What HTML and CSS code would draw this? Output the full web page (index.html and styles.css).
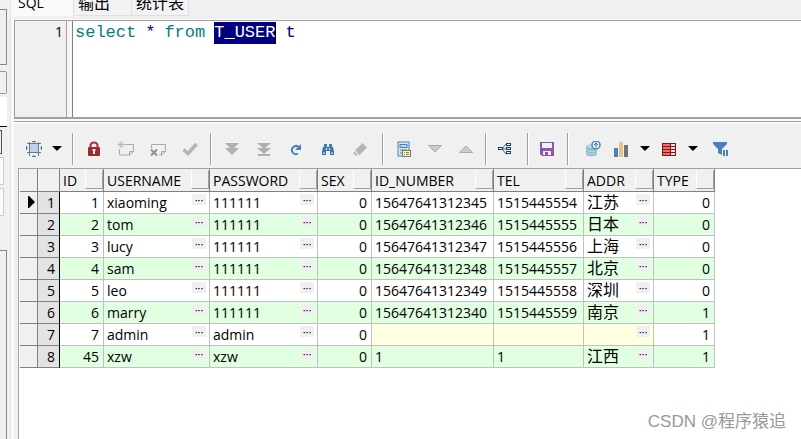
FILE: index.html
```html
<!DOCTYPE html>
<html lang="zh-CN">
<head>
<meta charset="utf-8">
<title>SQL</title>
<link rel="stylesheet" href="styles.css">
</head>
<body>
<aside class="dock">
  <div class="slot slot-list"></div>
  <div class="slot slot-button"></div>
  <div class="slot slot-page"></div>
  <div class="slot slot-field"></div>
  <div class="slot slot-pane"></div>
  <div class="slot slot-pane"></div>
  <div class="slot slot-tree"></div>
</aside>
<main class="window">
  <nav class="tabs">
    <button class="tab active" type="button">SQL</button>
    <button class="tab" type="button">输出</button>
    <button class="tab" type="button">统计表</button>
  </nav>
  <section class="editor">
    <div class="gutter">1</div>
    <div class="fold"></div>
    <code class="code"><span class="kw">select</span> <span>*</span> <span class="kw">from</span> <span class="selected">T_USER</span> <span>t</span></code>
  </section>
  <div class="splitter"></div>
  <div class="toolbar">
    <div class="group first">
      <button class="tool narrow" type="button" aria-label="Select"><svg width="16" height="16" viewBox="0 0 16 16"><rect x="4" y="3" width="8" height="8" fill="#b9d3ec"/><path d="M3.500 1v14M12.500 1v14M1 2.500h14M1 11.500h14" stroke="#777" fill="none"/><path d="M6 .5h4M8 0v2M6 15.500h4M8 14v2M.5 5v4M0 7h2M15.500 5v4M14 7h2" stroke="#4a80b8" fill="none"/></svg></button>
      <button class="tool caret" type="button" aria-label="Select options"><svg width="10" height="6" viewBox="0 0 10 6"><path d="M0 0h10L5 5z"/></svg></button>
    </div>
    <i class="sep"></i>
    <div class="group">
      <button class="tool" type="button" aria-label="Lock"><svg width="16" height="16" viewBox="0 0 16 16"><path d="M4.500 8V4.500a3.500 3 0 0 1 7 0V8" stroke="#a23337" stroke-width="2" fill="none"/><rect x="2" y="6" width="12" height="9" rx="1" fill="#982d31"/><path d="M6.500 8h3v2H9v3H7v-3h-.5z" fill="#f5e9e9"/></svg></button>
      <button class="tool" type="button" aria-label="Insert record"><svg width="18" height="16" viewBox="0 0 18 16"><path d="M8 3.500h8.500v7l-4 3.500h-10V8M16.500 10.500h-4V14" stroke="#aaa" fill="none"/><path d="M4 0v7M.5 3.500h7M1.500 1l5 5M6.500 1l-5 5" stroke="#b5b5b5" fill="none"/></svg></button>
      <button class="tool" type="button" aria-label="Delete record"><svg width="18" height="16" viewBox="0 0 18 16"><path d="M2.500 7V3.500h14v7l-4 3.500H10M16.500 10.500h-4V14" stroke="#aaa" fill="none"/><path d="M2 8.500l6 6M8 8.500l-6 6" stroke="#909090" stroke-width="2" fill="none"/></svg></button>
      <button class="tool" type="button" aria-label="Post changes"><svg width="16" height="16" viewBox="0 0 16 16"><path d="M1.500 8.500L6 12.500 14.500 3" stroke="#b5b5b5" stroke-width="3.500" fill="none"/></svg></button>
    </div>
    <i class="sep"></i>
    <div class="group fetch">
      <button class="tool" type="button" aria-label="Next page"><svg width="14" height="16" viewBox="0 0 14 16"><path d="M0 2h14L7 9zM0 7h14L7 14z" fill="#b0b0b0"/></svg></button>
      <button class="tool" type="button" aria-label="Last page"><svg width="14" height="16" viewBox="0 0 14 16"><path d="M0 2h14L7 8zM0 7h14L7 13zM1 13h12v2H1z" fill="#b0b0b0"/></svg></button>
      <button class="tool" type="button" aria-label="Refresh"><svg width="12" height="16" viewBox="0 0 12 16"><path d="M8 12.500A4 4 0 1 1 8.500 6" stroke="#4a80b8" stroke-width="2" fill="none"/><path d="M11 3v6H5z" fill="#4a80b8"/></svg></button>
      <button class="tool" type="button" aria-label="Find"><svg width="12" height="16" viewBox="0 0 12 16"><path d="M2 3h3v3h2V3h3v3h1l1 4v4H8v-4H4v4H0v-4l1-4h1z" fill="#4179b5"/><path d="M1.500 11h1v2h-1zM9.500 11h1v2h-1zM4 7h1v2H4zM7 7h1v2H7z" fill="#e8eef5"/></svg></button>
      <button class="tool" type="button" aria-label="Clear"><svg width="16" height="16" viewBox="0 0 16 16"><path d="M10.500 2L15 6.500 7.500 14 3 9.500z" fill="#b5b5b5"/><path d="M2.500 10.500L6.500 14.500H3.500L1 12z" fill="#b5b5b5"/></svg></button>
    </div>
    <i class="sep"></i>
    <div class="group records">
      <button class="tool" type="button" aria-label="Single record view"><svg width="14" height="16" viewBox="0 0 14 16"><rect x="1" y="1" width="11" height="14" fill="#d9e7f4" stroke="#4a80b8"/><rect x="3" y="3.500" width="7" height="3" fill="#b9d3ec" stroke="#4a80b8"/><path d="M3 9h7M3 12h7" stroke="#4a80b8"/><rect x="5.500" y="9.500" width="8" height="6" fill="#ffff9c" stroke="#777"/><path d="M7 11.500h1M9 11.500h3M7 13.500h1M9 13.500h3" stroke="#777"/></svg></button>
      <button class="tool" type="button" aria-label="Next record"><svg width="16" height="16" viewBox="0 0 16 16"><path d="M1.500 4.500h13L8 11z" fill="#ccc" stroke="#aaa"/></svg></button>
      <button class="tool" type="button" aria-label="Previous record"><svg width="16" height="16" viewBox="0 0 16 16"><path d="M1.500 11.500h13L8 5z" fill="#ccc" stroke="#aaa"/></svg></button>
    </div>
    <i class="sep"></i>
    <div class="group links">
      <button class="tool" type="button" aria-label="Linked query"><svg width="14" height="16" viewBox="0 0 14 16"><path d="M4 8h5M4 8l4-5h1M4 8l4 5h1" stroke="#666" fill="none"/><rect x=".5" y="6.500" width="4" height="2" fill="#fff" stroke="#123f80"/><rect x="8.500" y="2.500" width="4" height="2" fill="#fff" stroke="#123f80"/><rect x="8.500" y="6.500" width="4" height="2" fill="#ff0" stroke="#123f80"/><rect x="8.500" y="10.500" width="4" height="2" fill="#fff" stroke="#123f80"/></svg></button>
    </div>
    <i class="sep"></i>
    <div class="group save">
      <button class="tool" type="button" aria-label="Save"><svg width="14" height="16" viewBox="0 0 14 16"><path d="M0 1h14v14H2l-2-2z" fill="#8c56ab"/><path d="M2 2h10v5H2zM3 10h8v4H3z" fill="#f4eff7"/><path d="M5 11h3v3H5z" fill="#8c56ab"/></svg></button>
    </div>
    <i class="sep"></i>
    <div class="group export">
      <button class="tool" type="button" aria-label="Export to database"><svg width="16" height="16" viewBox="0 0 16 16"><path d="M1 5v8c0 3 11 3 11 0V5z" fill="#8bbccb"/><ellipse cx="6.500" cy="5" rx="5.500" ry="2" fill="#b8d9e2"/><path d="M1 8c0 3 11 3 11 0M1 11c0 3 11 3 11 0" stroke="#c5e0e8" fill="none"/><circle cx="11" cy="4" r="4" fill="#f3f7fc" stroke="#4a80b8" stroke-width="1.500"/><path d="M11 1.500v5M9 4l2-2 2 2" stroke="#2b66a7" fill="none"/></svg></button>
      <button class="tool narrow" type="button" aria-label="Chart"><svg width="14" height="16" viewBox="0 0 14 16"><path d="M0 7h4v9H0z" fill="#4a80b8"/><path d="M5 1h4v15H5z" fill="#e9c182"/><path d="M10 4h4v12h-4z" fill="#737373"/></svg></button>
      <button class="tool caret" type="button" aria-label="Chart options"><svg width="10" height="6" viewBox="0 0 10 6"><path d="M0 0h10L5 5z"/></svg></button>
      <button class="tool narrow" type="button" aria-label="Grid layout"><svg width="14" height="14" viewBox="0 0 14 14"><rect x=".5" y="1.500" width="13" height="12" fill="#f36d6d" stroke="#7d1518"/><path d="M9 2h4v11H9z" fill="#f5dede"/><path d="M1 4.500h12M1 7.500h12M1 10.500h12M8.500 2v11" stroke="#7d1518"/></svg></button>
      <button class="tool caret" type="button" aria-label="Grid options"><svg width="10" height="6" viewBox="0 0 10 6"><path d="M0 0h10L5 5z"/></svg></button>
      <button class="tool" type="button" aria-label="Filter"><svg width="16" height="16" viewBox="0 0 16 16"><path d="M0 1h14v2L9 8v6l-4-2V8L0 3zM10 9h2v6h-2zM13 9h2v6h-2z" fill="#4a80b8"/></svg></button>
    </div>
  </div>
  <section class="results">
    <table class="grid">
      <colgroup><col class="c-mark"><col class="c-row"><col class="c-id"><col class="c-user"><col class="c-pass"><col class="c-sex"><col class="c-idnum"><col class="c-tel"><col class="c-addr"><col class="c-type"></colgroup>
      <thead><tr><th></th><th></th><th><span class="head">ID<i></i></span></th><th><span class="head">USERNAME<i></i></span></th><th><span class="head">PASSWORD<i></i></span></th><th><span class="head">SEX<i></i></span></th><th><span class="head">ID_NUMBER<i></i></span></th><th><span class="head">TEL<i></i></span></th><th><span class="head">ADDR<i></i></span></th><th><span class="head">TYPE<i></i></span></th></tr></thead>
      <tbody>
        <tr><td class="mark"><svg width="7" height="12" viewBox="0 0 7 12"><path d="M0 0h1l6 6-6 6H0z"/></svg></td><td class="row">1</td><td class="num">1</td><td><span class="cell">xiaoming<button type="button">···</button></span></td><td><span class="cell">111111<button type="button">···</button></span></td><td class="num">0</td><td>15647641312345</td><td>1515445554</td><td><span class="cell addr">江苏<button type="button">···</button></span></td><td class="num">0</td></tr>
        <tr><td class="mark"></td><td class="row">2</td><td class="num">2</td><td><span class="cell">tom<button type="button">···</button></span></td><td><span class="cell">111111<button type="button">···</button></span></td><td class="num">0</td><td>15647641312346</td><td>1515445555</td><td><span class="cell addr">日本<button type="button">···</button></span></td><td class="num">0</td></tr>
        <tr><td class="mark"></td><td class="row">3</td><td class="num">3</td><td><span class="cell">lucy<button type="button">···</button></span></td><td><span class="cell">111111<button type="button">···</button></span></td><td class="num">0</td><td>15647641312347</td><td>1515445556</td><td><span class="cell addr">上海<button type="button">···</button></span></td><td class="num">0</td></tr>
        <tr><td class="mark"></td><td class="row">4</td><td class="num">4</td><td><span class="cell">sam<button type="button">···</button></span></td><td><span class="cell">111111<button type="button">···</button></span></td><td class="num">0</td><td>15647641312348</td><td>1515445557</td><td><span class="cell addr">北京<button type="button">···</button></span></td><td class="num">0</td></tr>
        <tr><td class="mark"></td><td class="row">5</td><td class="num">5</td><td><span class="cell">leo<button type="button">···</button></span></td><td><span class="cell">111111<button type="button">···</button></span></td><td class="num">0</td><td>15647641312349</td><td>1515445558</td><td><span class="cell addr">深圳<button type="button">···</button></span></td><td class="num">0</td></tr>
        <tr><td class="mark"></td><td class="row">6</td><td class="num">6</td><td><span class="cell">marry<button type="button">···</button></span></td><td><span class="cell">111111<button type="button">···</button></span></td><td class="num">0</td><td>15647641312340</td><td>1515445559</td><td><span class="cell addr">南京<button type="button">···</button></span></td><td class="num">1</td></tr>
        <tr><td class="mark"></td><td class="row">7</td><td class="num">7</td><td><span class="cell">admin<button type="button">···</button></span></td><td><span class="cell">admin<button type="button">···</button></span></td><td class="num">0</td><td class="null"></td><td class="null"></td><td class="null"><span class="cell addr"><button type="button">···</button></span></td><td class="num">1</td></tr>
        <tr><td class="mark"></td><td class="row">8</td><td class="num">45</td><td><span class="cell">xzw<button type="button">···</button></span></td><td><span class="cell">xzw<button type="button">···</button></span></td><td class="num">0</td><td>1</td><td>1</td><td><span class="cell addr">江西<button type="button">···</button></span></td><td class="num">1</td></tr>
      </tbody>
    </table>
    <p class="credit">CSDN @程序猿追</p>
  </section>
</main>
</body>
</html>
```
FILE: styles.css
```css
* { box-sizing: border-box; }

body {
  margin: 0;
  height: 100vh;
  display: flex;
  overflow: hidden;
  background: #f0f0f0;
  color: #000;
  font-family: "Open Sans", "Noto Sans CJK SC", sans-serif;
  font-size: 14px;
}

button {
  border: 0;
  padding: 0;
  background: none;
  color: inherit;
  font: inherit;
}

/* Edge of the neighbouring dock */
.dock {
  flex: none;
  width: 14px;
  padding-top: 9px;
  display: flex;
  flex-direction: column;
  align-items: flex-start;
  background: linear-gradient(to right, #f0f0f0 10px, #e3e3e3 10px, #e3e3e3 11px, #f9f9f9 11px);
}

.slot {
  flex: none;
  width: 7px;
  border: 1px solid #828790;
  border-left: 0;
}

.slot-list { height: 56px; margin-bottom: 6px; }
.slot-button { height: 23px; margin-bottom: 3px; border-color: #999; border-radius: 0 2px 2px 0; }
.slot-page { height: 30px; margin-bottom: 3px; border: 0; border-bottom: 1px solid #000; background: #fff; }
.slot-field { width: 2px; height: 24px; margin-bottom: 3px; border-color: #555; }
.slot-pane { width: 4px; height: 28px; margin-bottom: 3px; border-color: #ccc; background: #fafafa; }
.slot-tree { flex: 1; margin-top: 31px; border-bottom: 0; }

.window {
  flex: 1;
  min-width: 0;
  display: flex;
  flex-direction: column;
}

.tabs {
  flex: none;
  height: 20px;
  padding-bottom: 3px;
  display: flex;
  align-items: flex-end;
  overflow: hidden;
  border-bottom: 1px solid #f9f9f9;
}

.tab {
  flex: none;
  height: 24px;
  padding: 0 4px 1px;
  border: solid #e0e0e0;
  border-width: 0 1px 1px 0;
  background: #f3f3f3;
  font-size: 16px;
  line-height: 22px;
  text-align: left;
}

.tab:nth-child(2) { min-width: 58px; }
.tab.active { min-width: 60px; padding-bottom: 3px; background: #f9f9f9; border-bottom-color: #f9f9f9; font-size: 14px; }

.editor {
  flex: none;
  min-height: 99px;
  display: flex;
  border: solid #a0a0a0;
  border-width: 1px 0 2px 1px;
  background: #fff;
  font-family: "Liberation Mono", monospace;
  font-size: 17px;
  line-height: 22px;
}

.gutter {
  width: 52px;
  padding: 0 3px;
  border-right: 1px solid #a0a0a0;
  background: #f0f0f0;
  font-family: "Open Sans", sans-serif;
  font-size: 14px;
  text-align: right;
}

.fold {
  width: 6px;
  border-right: 1px solid #808080;
  background: #f5f5f5;
}

.code {
  display: flex;
  align-items: flex-start;
  gap: 9px;
  padding: 1px 2px;
  color: #000080;
  font: inherit;
}

.kw { color: #008080; }
.selected { background: #000080; color: #fff; border-right: 1px solid #000; }

.splitter {
  flex: none;
  height: 5px;
  border-top: 2px solid #f9f9f9;
  border-bottom: 1px solid #f9f9f9;
  background: linear-gradient(#a0a0a0 1px, #f9f9f9 1px);
  background-clip: padding-box;
}

.toolbar {
  flex: none;
  height: 44px;
  padding-top: 6px;
  display: flex;
  align-items: center;
}

.group { display: flex; align-items: center; height: 32px; }
.first { padding-left: 8px; }
.fetch { padding-right: 2px; }
.records .tool { width: 31px; }
.links { padding-right: 4px; }
.links .tool, .save .tool { width: 28px; }
.save { padding-right: 2px; }
.export { padding-left: 4px; }

.tool {
  width: 32px;
  height: 32px;
  display: grid;
  place-items: center;
}

.tool.narrow { width: 24px; }
.tool.caret { width: 22px; }
.export .tool.caret { width: 24px; }
.tool svg { display: block; }

.sep {
  width: 2px;
  height: 32px;
  margin: 0 4px;
  border-left: 1px solid #a0a0a0;
  background: #fff;
}

.results {
  flex: 1;
  margin-left: 4px;
  padding-left: 1px;
  display: flex;
  flex-direction: column;
  justify-content: space-between;
  border: solid #a0a0a8;
  border-width: 1px 0 0 1px;
  background: #fff;
}

.grid {
  width: 695px;
  table-layout: fixed;
  border-collapse: separate;
  border-spacing: 0;
}

.c-mark { width: 18px; }
.c-row { width: 22px; }
.c-id { width: 44px; }
.c-user { width: 106px; }
.c-pass { width: 108px; }
.c-sex { width: 54px; }
.c-idnum { width: 122px; }
.c-tel { width: 90px; }
.c-addr { width: 70px; }
.c-type { width: 61px; }

.grid th, .grid td {
  height: 22px;
  padding: 0 0 0 3px;
  border: solid #c0c0c0;
  border-width: 0 1px 1px 0;
  font-weight: 400;
  line-height: 21px;
  text-align: left;
  white-space: nowrap;
}

.grid th { height: 23px; border-color: #808080; background: #f0f0f0; }
.grid tbody tr:nth-child(even) { background: #e1ffe1; }
.grid td.num { padding: 0 4px; text-align: right; }
.grid td.null { background: #ffffe1; }
.grid td.mark { padding: 0 2px; border-color: #808080; background: #f0f0f0; text-align: right; }
.grid td.row { padding: 0 4px; border-color: #808080; border-right-color: #000; background: #e3e3e3; text-align: right; }
.mark svg { display: inline-block; }

.head, .cell {
  display: flex;
  justify-content: space-between;
  align-items: flex-start;
  height: 21px;
}

.cell.addr { font-size: 16px; }

.head i {
  width: 18px;
  height: 19px;
  border: 1px solid #a0a0a0;
  border-top-color: #f0f0f0;
  border-left-color: #fff;
}

.cell button {
  width: 14px;
  height: 11px;
  margin: 2px 3px 0 auto;
  background: #f0f0f0;
  font-size: 11px;
  line-height: 9px;
}

.credit {
  margin: 0;
  padding: 0 15px 4px;
  color: #999;
  font-family: "Liberation Sans", "Noto Sans CJK SC", sans-serif;
  font-size: 17px;
  line-height: 26px;
  text-align: right;
}
```
